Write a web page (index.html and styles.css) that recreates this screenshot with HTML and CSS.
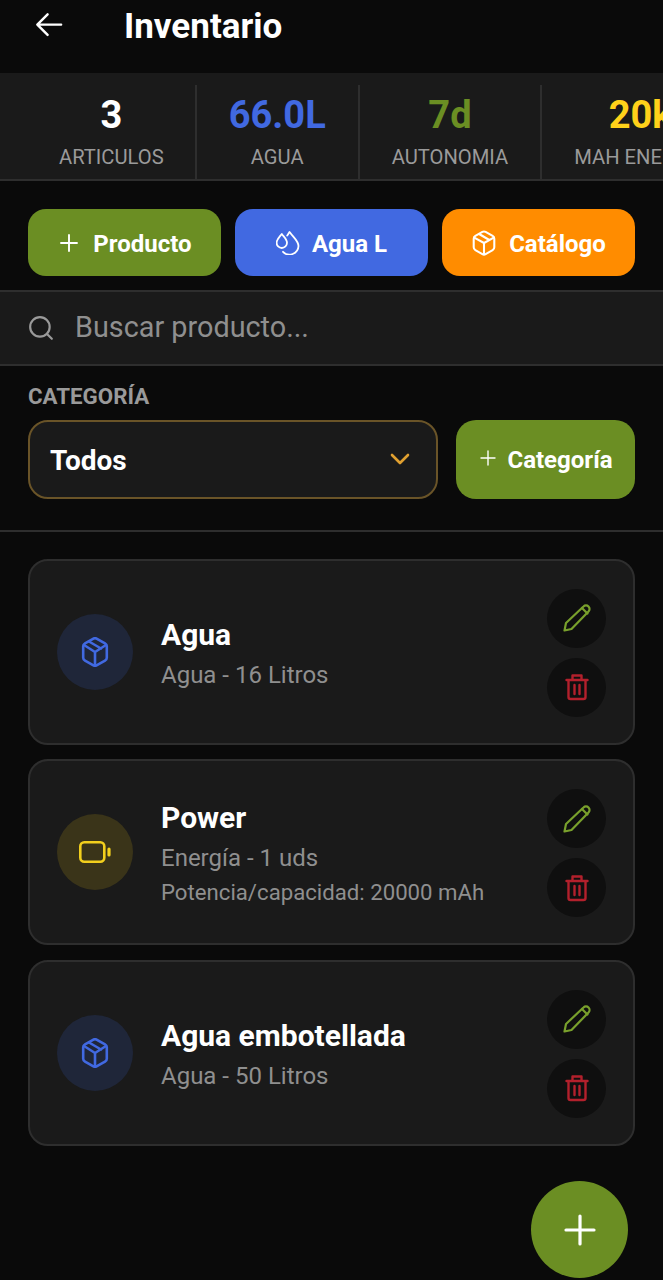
FILE: index.html
```html
<!DOCTYPE html>
<html lang="es">
<head>
<meta charset="utf-8">
<title>Inventario</title>
<link rel="stylesheet" href="styles.css">
</head>
<body>
<div class="app">
  <header class="topbar">
    <svg class="back" viewBox="0 0 30 30" fill="none" stroke="#fff" stroke-width="2.6" stroke-linecap="round" stroke-linejoin="round"><path d="M28 13.500H3M13.500 2.500 2.500 13.500l11 11"/></svg>
    <h1 class="title">Inventario</h1>
  </header>

  <section class="stats">
    <div class="stat stat-first"><div class="stat-value">3</div><div class="stat-label">ARTICULOS</div></div>
    <div class="stat"><div class="stat-value c-blue">66.0L</div><div class="stat-label">AGUA</div></div>
    <div class="stat"><div class="stat-value c-green">7d</div><div class="stat-label">AUTONOMIA</div></div>
    <div class="stat"><div class="stat-value c-yellow">20k</div><div class="stat-label">MAH ENERGÍA</div></div>
  </section>

  <section class="actions">
    <button class="btn bg-green">
      <svg class="btn-icon" viewBox="0 0 24 24" fill="none" stroke="#fff" stroke-width="1.900" stroke-linecap="round"><path d="M12 4v16M4 12h16"/></svg>
      <span>Producto</span>
    </button>
    <button class="btn bg-blue">
      <svg class="btn-icon" viewBox="0 0 24 24" fill="none" stroke="#fff" stroke-width="1.800" stroke-linecap="round" stroke-linejoin="round"><path d="M5.800 3C8 6 11 8.500 11 11.800a5.200 5.200 0 0 1-10.400 0C.6 8.500 3.500 6 5.800 3z"/><path d="M13.500 1c-.9 1.400-1.700 2.600-2.300 3.600M14 1.500c3 4.500 8.500 8.500 8.500 13.500A9 9 0 0 1 7 20.800"/></svg>
      <span>Agua L</span>
    </button>
    <button class="btn bg-orange">
      <svg class="btn-icon btn-icon-lg" viewBox="0 0 24 24" fill="none" stroke="#fff" stroke-width="1.900" stroke-linecap="round" stroke-linejoin="round"><path d="M10.500 1.800a3 3 0 0 1 3 0l6.500 3.700a3 3 0 0 1 1.500 2.600v7.800a3 3 0 0 1-1.500 2.600l-6.500 3.700a3 3 0 0 1-3 0L4 18.500a3 3 0 0 1-1.500-2.600V8.100A3 3 0 0 1 4 5.500z"/><path d="M3 7 12 12l9-5M12 12v10.500M7.500 3.700l9 5.300"/></svg>
      <span>Catálogo</span>
    </button>
  </section>

  <section class="search">
    <svg class="search-icon" viewBox="0 0 24 24" fill="none" stroke="#9a9a9a" stroke-width="2" stroke-linecap="round"><circle cx="11" cy="11" r="9"/><path d="m18 18 4 4"/></svg>
    <span class="search-text">Buscar producto...</span>
  </section>

  <section class="category">
    <div class="cat-label">CATEGORÍA</div>
    <div class="cat-row">
      <div class="select">
        <span>Todos</span>
        <svg class="chev" viewBox="0 0 20 12" fill="none" stroke="#e0a030" stroke-width="2.600" stroke-linecap="round" stroke-linejoin="round"><path d="m2 2 8 8 8-8"/></svg>
      </div>
      <button class="cat-btn bg-green">
        <svg class="cat-plus" viewBox="0 0 16 16" fill="none" stroke="#fff" stroke-width="1.400" stroke-linecap="round"><path d="M8 1v14M1 8h14"/></svg>
        <span>Categoría</span>
      </button>
    </div>
  </section>

  <main class="list">
    <article class="card">
      <div class="avatar av-blue">
        <svg class="av-icon" viewBox="0 0 30 30" fill="none" stroke="#4169e1" stroke-width="2.600" stroke-linecap="round" stroke-linejoin="round"><path d="M13 1.800a4 4 0 0 1 4 0l8 4.500a3.500 3.500 0 0 1 1.800 3v11.400a3.500 3.500 0 0 1-1.800 3l-8 4.500a4 4 0 0 1-4 0l-8-4.500a3.500 3.500 0 0 1-1.800-3V9.300a3.500 3.500 0 0 1 1.800-3z"/><path d="M4 8 15 15l11-7M15 15v13.500M9 4.500l12 7"/></svg>
      </div>
      <div class="info">
        <div class="name">Agua</div>
        <div class="sub">Agua - 16 Litros</div>
      </div>
      <div class="tools">
        <div class="tool"><svg class="tool-icon" viewBox="0 0 30 30" fill="none" stroke="#79a02c" stroke-width="2.200" stroke-linecap="round" stroke-linejoin="round"><path d="M2.500 27.500 4 20 21.500 3.500a3.500 3.500 0 0 1 5 5L9.500 26z"/><path d="m20 5 5.500 5.500"/></svg></div>
        <div class="tool"><svg class="trash-icon" viewBox="0 0 24 28" fill="none" stroke="#b3202c" stroke-width="2.400" stroke-linecap="round" stroke-linejoin="round"><path d="M1.500 7h21M7.500 7V2.500h9V7M3.500 7v17a2 2 0 0 0 2 2h13a2 2 0 0 0 2-2V7M9.500 12v9M14.500 12v9"/></svg></div>
      </div>
    </article>

    <article class="card">
      <div class="avatar av-yellow">
        <svg class="batt-icon" viewBox="0 0 32 22" fill="none" stroke="#f2cf1d" stroke-width="2.600" stroke-linecap="round" stroke-linejoin="round"><rect x="1.300" y="1.300" width="24" height="19.400" rx="4"/><path d="M30 8v6" stroke-width="3.200"/></svg>
      </div>
      <div class="info">
        <div class="name">Power</div>
        <div class="sub">Energía - 1 uds</div>
        <div class="sub sub-small">Potencia/capacidad: 20000 mAh</div>
      </div>
      <div class="tools">
        <div class="tool"><svg class="tool-icon" viewBox="0 0 30 30" fill="none" stroke="#79a02c" stroke-width="2.200" stroke-linecap="round" stroke-linejoin="round"><path d="M2.500 27.500 4 20 21.500 3.500a3.500 3.500 0 0 1 5 5L9.500 26z"/><path d="m20 5 5.500 5.500"/></svg></div>
        <div class="tool"><svg class="trash-icon" viewBox="0 0 24 28" fill="none" stroke="#b3202c" stroke-width="2.400" stroke-linecap="round" stroke-linejoin="round"><path d="M1.500 7h21M7.500 7V2.500h9V7M3.500 7v17a2 2 0 0 0 2 2h13a2 2 0 0 0 2-2V7M9.500 12v9M14.500 12v9"/></svg></div>
      </div>
    </article>

    <article class="card">
      <div class="avatar av-blue">
        <svg class="av-icon" viewBox="0 0 30 30" fill="none" stroke="#4169e1" stroke-width="2.600" stroke-linecap="round" stroke-linejoin="round"><path d="M13 1.800a4 4 0 0 1 4 0l8 4.500a3.500 3.500 0 0 1 1.800 3v11.400a3.500 3.500 0 0 1-1.800 3l-8 4.500a4 4 0 0 1-4 0l-8-4.500a3.500 3.500 0 0 1-1.800-3V9.300a3.500 3.500 0 0 1 1.800-3z"/><path d="M4 8 15 15l11-7M15 15v13.500M9 4.500l12 7"/></svg>
      </div>
      <div class="info">
        <div class="name">Agua embotellada</div>
        <div class="sub">Agua - 50 Litros</div>
      </div>
      <div class="tools">
        <div class="tool"><svg class="tool-icon" viewBox="0 0 30 30" fill="none" stroke="#79a02c" stroke-width="2.200" stroke-linecap="round" stroke-linejoin="round"><path d="M2.500 27.500 4 20 21.500 3.500a3.500 3.500 0 0 1 5 5L9.500 26z"/><path d="m20 5 5.500 5.500"/></svg></div>
        <div class="tool"><svg class="trash-icon" viewBox="0 0 24 28" fill="none" stroke="#b3202c" stroke-width="2.400" stroke-linecap="round" stroke-linejoin="round"><path d="M1.500 7h21M7.500 7V2.500h9V7M3.500 7v17a2 2 0 0 0 2 2h13a2 2 0 0 0 2-2V7M9.500 12v9M14.500 12v9"/></svg></div>
      </div>
    </article>
  </main>

  <button class="fab">
    <svg class="fab-icon" viewBox="0 0 32 32" fill="none" stroke="#fff" stroke-width="3.200" stroke-linecap="round"><path d="M16 2v28M2 16h28"/></svg>
  </button>
</div>
</body>
</html>
```
FILE: styles.css
```css
* { box-sizing: border-box; }
html, body { margin: 0; padding: 0; }
body { background: #0a0a0a; font-family: Roboto, "Liberation Sans", sans-serif; color: #fff; }
.app { position: relative; width: 663px; height: 1280px; overflow: hidden; background: #0a0a0a; }

.topbar { height: 73px; display: flex; align-items: flex-start; padding: 12px 0 0 34px; }
.back { width: 30px; height: 28px; flex: none; }
.title { margin: -3px 0 0 60px; font-size: 35px; line-height: 36px; font-weight: 700; }

.stats { height: 108px; display: flex; padding: 12px 0 0 27px; background: #1a1a1a; border-bottom: 2px solid #2e2e2e; overflow: hidden; }
.stat { flex: none; padding: 0 32px; height: 94px; border-right: 2px solid #2e2e2e; text-align: center; }
.stat:last-child { border-right: 0; }
.stat-first { padding-right: 31px; }
.stat-value { font-size: 38px; line-height: 44px; padding-top: 8px; font-weight: 700; height: 52px; }
.stat-label { margin-top: 8px; font-size: 20.200px; line-height: 24px; color: #9a9a9a; white-space: nowrap; }
.c-blue { color: #4169e1; }
.c-green { color: #6b8e23; }
.c-yellow { color: #ffd11a; }

.actions { display: flex; gap: 14px; padding: 28px 28px 14px; }
.btn { flex: 1; height: 67px; border: 0; border-radius: 18px; color: #fff; font: 700 24px Roboto, sans-serif; display: flex; align-items: center; justify-content: center; gap: 12px; padding: 0; }
.btn span { position: relative; top: 1px; }
.btn-icon { width: 24px; height: 24px; flex: none; }
.btn-icon-lg { width: 26px; height: 26px; }
.bg-green { background: #6b8e23; }
.bg-blue { background: #4169e1; }
.bg-orange { background: #ff8c00; }

.search { height: 76px; display: flex; align-items: center; gap: 21px; padding: 0 28px; background: #1a1a1a; border-top: 2px solid #2e2e2e; border-bottom: 2px solid #2e2e2e; }
.search-icon { width: 26px; height: 26px; flex: none; }
.search-text { font-size: 28.800px; color: #8f8f8f; margin-top: -2px; }

.category { padding: 17px 28px 31px; border-bottom: 2px solid #2e2e2e; }
.cat-label { font-size: 22.300px; line-height: 26px; font-weight: 700; color: #9a9a9a; margin-bottom: 11px; }
.cat-row { display: flex; gap: 18px; align-items: center; }
.select { flex: 1; height: 79px; background: #1a1a1a; border: 2px solid #6a5428; border-radius: 20px; display: flex; align-items: center; justify-content: space-between; padding: 2px 26px 0 20px; font-size: 28px; font-weight: 700; }
.chev { width: 20px; height: 12px; flex: none; margin-top: -4px; }
.cat-btn { flex: none; width: 179px; height: 79px; border: 0; border-radius: 20px; color: #fff; font: 700 24px Roboto, sans-serif; display: flex; align-items: center; justify-content: center; gap: 11px; padding: 0 0 0 2px; }
.cat-plus { width: 16px; height: 16px; flex: none; margin-top: -4px; }

.list { display: flex; flex-direction: column; gap: 14.500px; padding: 26.500px 28px 0; }
.card { height: 186px; display: flex; align-items: center; background: #1a1a1a; border: 2px solid #2e2e2e; border-radius: 20px; padding: 0 27px 0 27px; }
.avatar { width: 76px; height: 76px; border-radius: 50%; display: flex; align-items: center; justify-content: center; flex: none; }
.av-blue { background: #1f2639; }
.av-yellow { background: #3a3419; }
.av-icon { width: 30px; height: 30px; }
.batt-icon { width: 32px; height: 22px; }
.info { flex: 1; margin-left: 28px; padding-top: 4px; }
.name { font-size: 30px; line-height: 36px; font-weight: 700; }
.sub { font-size: 24px; line-height: 32px; margin-top: 6px; color: #8f8f8f; }
.sub-small { font-size: 22.200px; margin-top: 2px; }
.tools { display: flex; flex-direction: column; gap: 10px; flex: none; margin-top: 2px; }
.tool { width: 59px; height: 59px; border-radius: 50%; background: #0f0f0f; display: flex; align-items: center; justify-content: center; }
.tool-icon { width: 30px; height: 30px; }
.trash-icon { width: 24px; height: 28px; }

.fab { position: absolute; left: 531px; top: 1181px; width: 97px; height: 97px; border: 0; padding: 0; border-radius: 50%; background: #6b8e23; display: flex; align-items: center; justify-content: center; }
.fab-icon { width: 32px; height: 32px; }
```
